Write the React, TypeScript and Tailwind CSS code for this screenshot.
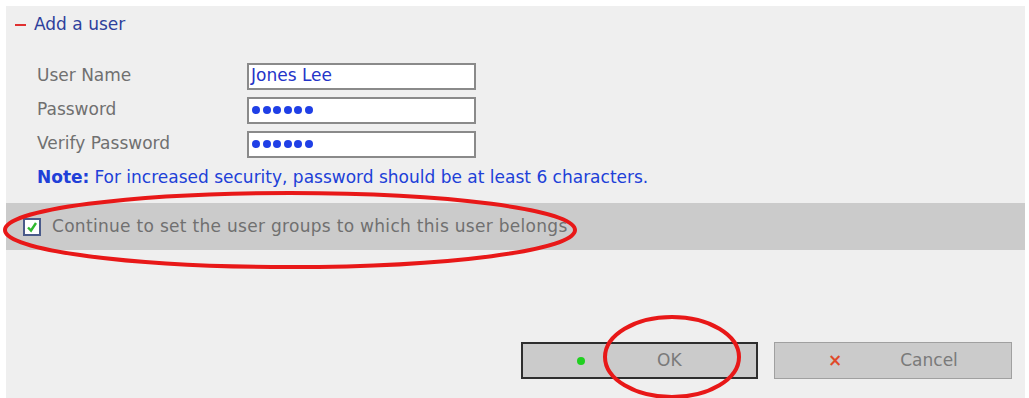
import React from "react";

const Dots = () => (
  <div className="flex items-center gap-[2.5px] pl-[3px]">
    {[0, 1, 2, 3, 4, 5].map((i) => (
      <span key={i} className="block w-[8px] h-[8px] rounded-full bg-[#1f3fe6]" />
    ))}
  </div>
);

const Row = ({ label, children }: { label: string; children: React.ReactNode }) => (
  <div className="flex items-center h-[34px]">
    <div className="w-[210px] text-[17px] text-[#707070]">{label}</div>
    <div className="w-[229px] h-[27px] bg-white border-2 border-[#8a8a8a] flex items-center">{children}</div>
  </div>
);

export default function App() {
  return (
    <div
      className="relative w-[1029px] h-[398px] bg-white pt-[6px] pl-[6px] pr-[4px] overflow-hidden"
      style={{ fontFamily: "'DejaVu Sans', Tahoma, sans-serif" }}
    >
      <div className="h-full bg-[#efefef] flex flex-col">
        <div className="flex items-center h-[38px] pl-[9px] text-[17px] gap-[8px]">
          <span className="inline-block w-[11px] h-[2px] bg-[#e03030]" />
          <span className="text-[#2e3f9c]">Add a user</span>
        </div>
        <div className="pl-[31px] pt-[15px] flex flex-col">
          <Row label="User Name">
            <span className="pl-[2px] text-[17px] text-[#2434c8]">Jones Lee</span>
          </Row>
          <Row label="Password">
            <Dots />
          </Row>
          <Row label="Verify Password">
            <Dots />
          </Row>
          <div className="h-[34px] flex items-center text-[17px] text-[#2040d8]">
            <span className="font-bold mr-[5px]">Note:</span>
            <span>For increased security, password should be at least 6 characters.</span>
          </div>
        </div>
        <div className="mt-[8px] h-[47px] bg-[#cbcbcb] flex items-center pl-[17px] gap-[11px]">
          <div className="w-[18px] h-[18px] border-2 border-[#4a5a8a] bg-white flex items-center justify-center">
            <svg width="12" height="12" viewBox="0 0 12 12">
              <path d="M2 6.5 L5 9.5 L10 2" stroke="#2fb82f" strokeWidth="2.4" fill="none" />
            </svg>
          </div>
          <span className="text-[17px] tracking-[0.3px] text-[#707070]">
            Continue to set the user groups to which this user belongs
          </span>
        </div>
        <div className="flex-1" />
        <div className="flex justify-end gap-[16px] pr-[13px] pb-[19px]">
          <div className="w-[237px] h-[37px] bg-[#cbcbcb] border-2 border-[#2e2e2e] flex items-center">
            <span className="ml-[54px] w-[8px] h-[8px] rounded-full bg-[#20d020]" />
            <span className="ml-[72px] text-[17px] text-[#7a7a7a]">OK</span>
          </div>
          <div className="w-[238px] h-[37px] bg-[#cbcbcb] border border-[#a0a0a0] flex items-center">
            <span className="ml-[53px] text-[17px] font-bold text-[#e04a2a]">×</span>
            <span className="ml-[58px] text-[17px] text-[#7a7a7a]">Cancel</span>
          </div>
        </div>
      </div>
      <svg className="absolute left-0 top-0 pointer-events-none" width="1029" height="398">
        <ellipse cx="290" cy="230" rx="285" ry="37" fill="none" stroke="#e81818" strokeWidth="4" />
        <ellipse cx="672" cy="357" rx="67" ry="40" fill="none" stroke="#e81818" strokeWidth="4" />
      </svg>
    </div>
  );
}
